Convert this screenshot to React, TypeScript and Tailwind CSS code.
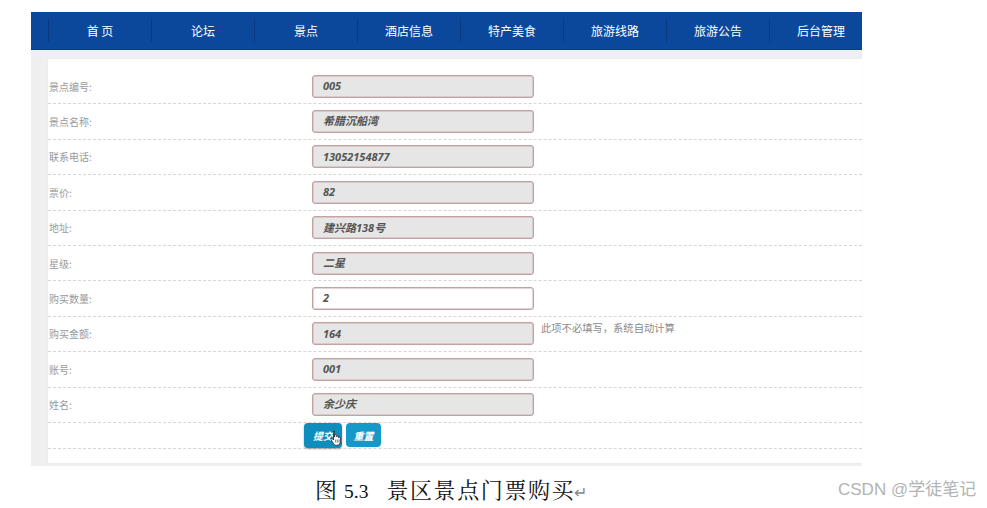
import React from "react";

const navItems = ["首 页", "论坛", "景点", "酒店信息", "特产美食", "旅游线路", "旅游公告", "后台管理"];

type Row = { label: string; value: string; white?: boolean; hint?: string };
const rows: Row[] = [
  { label: "景点编号:", value: "005" },
  { label: "景点名称:", value: "希腊沉船湾" },
  { label: "联系电话:", value: "13052154877" },
  { label: "票价:", value: "82" },
  { label: "地址:", value: "建兴路138号" },
  { label: "星级:", value: "二星" },
  { label: "购买数量:", value: "2", white: true },
  { label: "购买金额:", value: "164", hint: "此项不必填写，系统自动计算" },
  { label: "账号:", value: "001" },
  { label: "姓名:", value: "余少庆" },
];

const cjk = "font-['Microsoft_YaHei','Noto_Sans_CJK_SC',sans-serif]";

function Hand() {
  return (
    <svg className="absolute left-[26px] top-[7px]" width="12" height="16" viewBox="0 0 12 16">
      <path
        d="M3.5 1.2c.6 0 1 .4 1 1V7l.2-.1V5.6c0-.6.4-1 1-1s1 .4 1 1v1.2c.1-.5.5-.8 1-.8s.9.4.9.9v.9c.1-.4.5-.7.9-.7.5 0 .9.4.9.9v3.6c0 2-1.3 3.7-3.3 3.7H6.4c-1.3 0-2.1-.6-2.8-1.6L1.2 10c-.3-.5-.2-1 .2-1.3.4-.3 1-.2 1.3.2l.8 1.1V2.2c0-.6.4-1 1-1z"
        fill="#fff"
        stroke="#222"
        strokeWidth="0.8"
        strokeLinejoin="round"
      />
      <path d="M5.6 9.5v3M7.3 9.5v3M9 9.5v3" stroke="#222" strokeWidth="0.6" />
    </svg>
  );
}

export default function App() {
  return (
    <div className={`w-[987px] h-[508px] bg-white relative overflow-hidden ${cjk}`}>
      <div className="pt-[12px] pl-[31px] w-[862px]">
        {/* nav */}
        <div className="h-[38px] bg-[#0b479b] flex items-stretch overflow-hidden border-b border-[#0a3f86]">
          <div className="w-[17px] shrink-0" />
          {navItems.map((n) => (
            <div
              key={n}
              className="w-[103px] shrink-0 flex items-center justify-center text-white text-[12px] border-l border-[#083a7f] my-[7px]"
            >
              {n}
            </div>
          ))}
        </div>
        {/* content */}
        <div className="bg-[#efefef] pt-[9px] pb-[3px] pl-[17px]">
          <div className="bg-white pt-[10px] pb-[14px] shadow-[0_0_1px_rgba(0,0,0,0.08)]">
            {rows.map((r) => (
              <div
                key={r.label}
                className="h-[35.4px] flex items-center border-b border-dashed border-[#d6d6d6] relative"
              >
                <div className="w-[264px] pl-[1px] text-[10px] text-[#9a9a9a]">{r.label}</div>
                <div
                  className={`w-[222px] h-[23px] rounded-[3px] border border-[#c2a2a2] flex items-center pl-[10px] text-[11px] font-bold italic text-[#555] font-['Open_Sans','Noto_Sans_CJK_SC',sans-serif] ${
                    r.white ? "bg-white" : "bg-[#e6e6e6]"
                  } shadow-[inset_0_0_0_0.5px_#c9aeae]`}
                >
                  {r.value}
                </div>
                {r.hint && (
                  <div className="absolute left-[493px] top-[3px] text-[10.3px] text-[#8a8a8a]">{r.hint}</div>
                )}
              </div>
            ))}
            <div className="h-[26px] flex items-center border-b border-dashed border-[#d6d6d6]">
              <div className="w-[256px]" />
              <div className="flex gap-[4px] pt-[1px]">
                <div className="relative w-[38px] h-[25px] rounded-[4px] bg-[#0f8dbd] shadow-[0_1px_2px_rgba(0,0,0,0.35)] flex items-center justify-center text-white text-[10px] font-bold italic">
                  提交
                  <Hand />
                </div>
                <div className="w-[35px] h-[24px] rounded-[4px] bg-[#1599cb] flex items-center justify-center text-white text-[10px] font-bold italic">
                  重置
                </div>
              </div>
            </div>
          </div>
        </div>
      </div>
      {/* caption */}
      <div className="absolute left-[315px] top-[477px] flex items-baseline leading-[28px] text-[#111] font-['Liberation_Serif','Noto_Serif_CJK_SC','Noto_Sans_CJK_SC',serif] whitespace-pre">
        <span className="text-[22px]">图</span>
        <span className="text-[19.5px] ml-[7px]">5.3</span>
        <span className="text-[22px] tracking-[1.6px] ml-[18px]">景区景点门票购买</span>
        <span className="text-[#888] text-[16px] -ml-[1px]">↵</span>
      </div>
      <div className="absolute left-[838px] top-[479px] text-[17px] leading-[22px] text-[#b3b3b3] font-['Liberation_Sans','Noto_Sans_CJK_SC',sans-serif] whitespace-pre">
        CSDN @学徒笔记
      </div>
    </div>
  );
}
